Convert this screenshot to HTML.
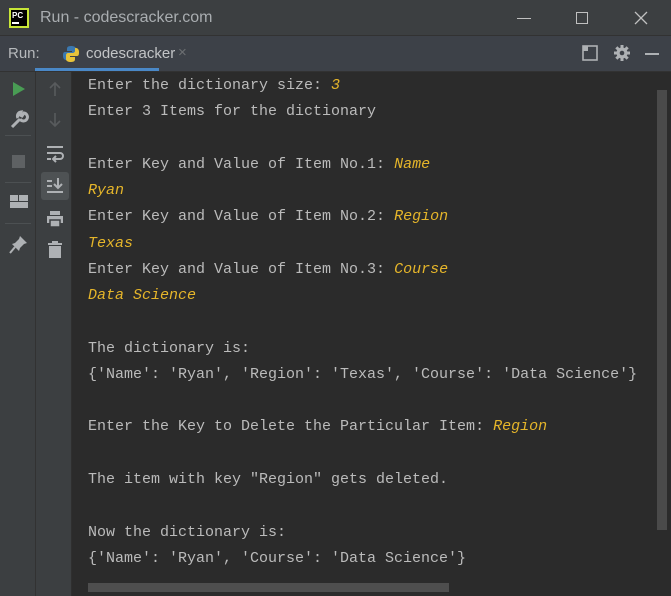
<!DOCTYPE html>
<html><head><meta charset="utf-8"><style>
*{margin:0;padding:0;box-sizing:border-box}
body{width:671px;height:596px;overflow:hidden;background:#2b2b2b;position:relative;font-family:"Liberation Sans",sans-serif}
.title{position:absolute;left:0;top:0;width:671px;height:36px;background:#3c3f41;border-bottom:1px solid #323232}
.title .t{position:absolute;left:40px;top:9px;color:#a9adb0;font-size:16px}
.runbar{position:absolute;left:0;top:36px;width:671px;height:36px;background:#3d4148;border-bottom:1px solid #323232}
.runbar .r{position:absolute;left:8px;top:9px;color:#b6b9bc;font-size:15px}
.tab{position:absolute;left:60px;top:9px;color:#c2c4c6;font-size:15px}
.ul{position:absolute;left:35px;top:32px;width:124px;height:3px;background:#4a88c7}
.col1{position:absolute;left:0;top:72px;width:36px;height:524px;background:#3c3f41;border-right:1px solid #323232}
.col2{position:absolute;left:36px;top:72px;width:36px;height:524px;background:#3c3f41;border-right:1px solid #2f2f2f}
.con{position:absolute;left:88px;top:73px;font-family:"Liberation Mono",monospace;font-size:15px;color:#bbbbbb}
.con div{height:26.28px;line-height:26.28px;white-space:pre}
i{color:#e5b52a}
.vs{position:absolute;left:657px;top:90px;width:10px;height:440px;background:#4a4a4a}
.hs{position:absolute;left:88px;top:583px;width:361px;height:9px;background:#4e4e4e}
</style></head><body>
<div class="title">
<svg style="position:absolute;left:9px;top:8px" width="20" height="20"><rect width="20" height="20" fill="#c8e637"/><rect x="2" y="2" width="16" height="16" fill="#000"/><text x="3" y="10" font-size="8" fill="#fff" font-family="Liberation Sans" font-weight="bold">PC</text><rect x="3" y="14" width="7" height="2" fill="#fff"/></svg>
<span class="t">Run - codescracker.com</span>
<div style="position:absolute;left:517px;top:18px;width:14px;height:1px;background:#c0c0c0"></div>
<div style="position:absolute;left:576px;top:12px;width:12px;height:12px;border:1px solid #c0c0c0"></div>
<svg style="position:absolute;left:634px;top:11px" width="14" height="14"><path d="M1 1L13 13M13 1L1 13" stroke="#c0c0c0" stroke-width="1.3"/></svg>
</div>
<div class="runbar">
<span class="r">Run:</span>
<svg style="position:absolute;left:62px;top:9px" width="18" height="18"><path d="M9 1C5 1 5 3 5 4v2h5v1H3C1 7 1 9 1 11s1 4 3 4h1v-3c0-1 1-2 3-2h4c1 0 2-1 2-2V4c0-2-2-3-5-3z" fill="#3b78b0"/><path d="M9 17c4 0 4-2 4-3v-2H8v-1h7c2 0 2-2 2-4s-1-4-3-4h-1v3c0 1-1 2-3 2H6c-1 0-2 1-2 2v4c0 2 2 3 5 3z" fill="#e7c33a"/></svg>
<span class="tab" style="left:86px">codescracker</span>
<span style="position:absolute;left:178px;top:8px;color:#6d7073;font-size:15px">×</span>
<div class="ul"></div>
<svg style="position:absolute;left:582px;top:9px" width="16" height="16"><rect x="1" y="1" width="14" height="14" fill="none" stroke="#aeb1b4" stroke-width="1.6"/><rect x="1" y="1" width="5" height="5" fill="#aeb1b4"/></svg>
<svg style="position:absolute;left:613px;top:8px" width="18" height="18"><g fill="#aeb1b4"><circle cx="9" cy="9" r="5.5"/><rect x="7.5" y="1" width="3" height="16"/><rect x="1" y="7.5" width="16" height="3"/><rect x="7.5" y="1" width="3" height="16" transform="rotate(45 9 9)"/><rect x="7.5" y="1" width="3" height="16" transform="rotate(-45 9 9)"/></g><circle cx="9" cy="9" r="2.3" fill="#3d4148"/></svg>
<div style="position:absolute;left:645px;top:17px;width:14px;height:2px;background:#aeb1b4"></div>
</div>
<div class="col1">
<svg style="position:absolute;left:12px;top:9px" width="14" height="16"><path d="M1 1L13 8L1 15Z" fill="#499c54"/></svg>
<svg style="position:absolute;left:9px;top:38px" width="20" height="20"><path d="M3 17L11 9M11 9a4 4 0 1 0 4-6l-2 3-2-1 1-3a4 4 0 0 0-3 6" stroke="#aeb1b4" stroke-width="3" fill="none"/></svg>
<div style="position:absolute;left:5px;top:63px;width:26px;height:1px;background:#4c5052"></div>
<div style="position:absolute;left:12px;top:83px;width:13px;height:13px;background:#5e6163"></div>
<div style="position:absolute;left:5px;top:110px;width:26px;height:1px;background:#4c5052"></div>
<svg style="position:absolute;left:10px;top:123px" width="18" height="14"><rect x="0" y="0" width="8" height="6" fill="#aeb1b4"/><rect x="9" y="0" width="9" height="6" fill="#aeb1b4"/><rect x="0" y="7" width="18" height="6" fill="#aeb1b4"/></svg>
<div style="position:absolute;left:5px;top:151px;width:26px;height:1px;background:#4c5052"></div>
<svg style="position:absolute;left:9px;top:162px" width="20" height="20"><path d="M11 2L18 9L15 10L11 14L10 17L3 10L6 9L10 5Z" fill="#aeb1b4"/><path d="M6 13L1 19" stroke="#aeb1b4" stroke-width="2"/></svg>
</div>
<div class="col2">
<svg style="position:absolute;left:12px;top:9px" width="14" height="16"><path d="M7 15V2M2 7l5-5 5 5" stroke="#585b5d" stroke-width="1.6" fill="none"/></svg>
<svg style="position:absolute;left:12px;top:40px" width="14" height="16"><path d="M7 1v13M2 9l5 5 5-5" stroke="#585b5d" stroke-width="1.6" fill="none"/></svg>
<svg style="position:absolute;left:10px;top:73px" width="18" height="18"><path d="M1 2h16M1 8h13a3 3 0 0 1 0 6H8M10 11l-3 3 3 3M1 14h4" stroke="#aeb1b4" stroke-width="2" fill="none"/></svg>
<div style="position:absolute;left:5px;top:100px;width:28px;height:28px;background:#4e5254;border-radius:3px"></div>
<svg style="position:absolute;left:10px;top:105px" width="18" height="18"><path d="M1 4h5M1 9h5M1 15h16M12 1v10M8 7l4 4 4-4" stroke="#aeb1b4" stroke-width="2" fill="none"/></svg>
<svg style="position:absolute;left:10px;top:138px" width="18" height="18"><rect x="4" y="1" width="10" height="4" fill="#aeb1b4"/><rect x="1" y="6" width="16" height="7" fill="#aeb1b4"/><rect x="4" y="10" width="10" height="7" fill="#aeb1b4" stroke="#3c3f41" stroke-width="1.5"/></svg>
<svg style="position:absolute;left:11px;top:169px" width="16" height="18"><rect x="1" y="2" width="14" height="2" fill="#aeb1b4"/><rect x="5" y="0" width="6" height="2" fill="#aeb1b4"/><rect x="2" y="5" width="12" height="12" fill="#aeb1b4"/></svg>
</div>
<div class="con"><div>Enter the dictionary size: <i>3</i></div><div>Enter 3 Items for the dictionary</div><div> </div><div>Enter Key and Value of Item No.1: <i>Name</i></div><div><i>Ryan</i></div><div>Enter Key and Value of Item No.2: <i>Region</i></div><div><i>Texas</i></div><div>Enter Key and Value of Item No.3: <i>Course</i></div><div><i>Data Science</i></div><div> </div><div>The dictionary is:</div><div>{'Name': 'Ryan', 'Region': 'Texas', 'Course': 'Data Science'}</div><div> </div><div>Enter the Key to Delete the Particular Item: <i>Region</i></div><div> </div><div>The item with key "Region" gets deleted.</div><div> </div><div>Now the dictionary is:</div><div>{'Name': 'Ryan', 'Course': 'Data Science'}</div></div>
<div class="vs"></div>
<div class="hs"></div>
</body></html>
